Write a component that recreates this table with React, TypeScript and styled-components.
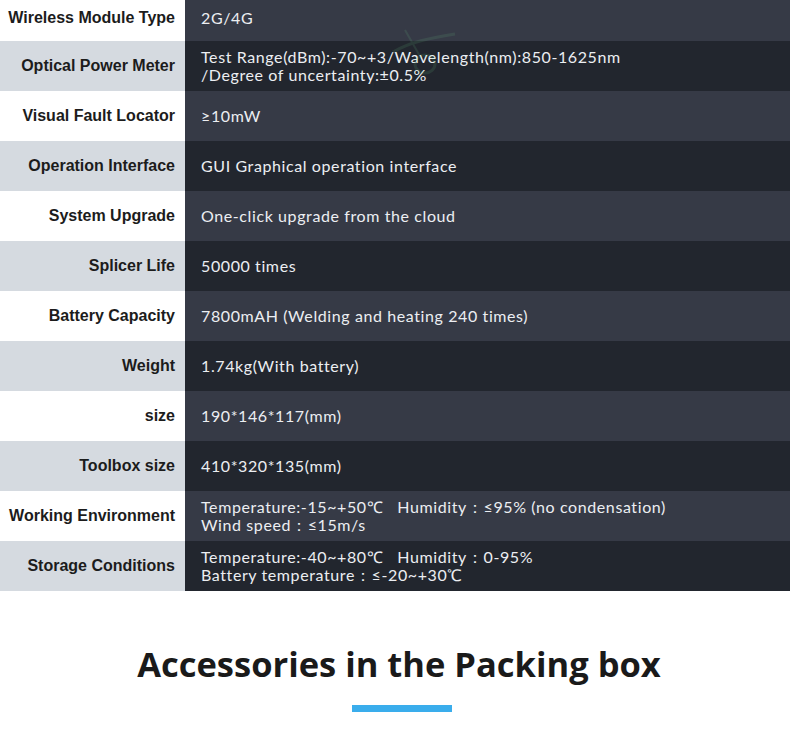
import { FC } from 'react';
import styled, { createGlobalStyle } from 'styled-components';

const GlobalStyle = createGlobalStyle`
  html, body {
    margin: 0;
    padding: 0;
    background: #ffffff;
  }
`;

const Page = styled.div`
  width: 790px;
  height: 750px;
  overflow: hidden;
  background: #ffffff;
`;

const SpecTable = styled.div`
  position: relative;
  display: flex;
  flex-direction: column;
`;

const SpecRow = styled.div<{ $first?: boolean }>`
  display: grid;
  grid-template-columns: 185px 1fr;
  height: ${({ $first }) => ($first ? '41px' : '50px')};
  box-sizing: border-box;
`;

const SpecLabel = styled.div<{ $alt: boolean; $first?: boolean }>`
  display: flex;
  align-items: center;
  justify-content: flex-end;
  padding: ${({ $first }) => ($first ? '0 10px 6px 0' : '0 10px 0 0')};
  background: ${({ $alt }) => ($alt ? '#d5dae0' : '#ffffff')};
  color: #1c1c1c;
  font-family: 'Liberation Sans', Arial, sans-serif;
  font-weight: 700;
  font-size: 16px;
  white-space: nowrap;
`;

const SpecValue = styled.div<{ $alt: boolean; $first?: boolean }>`
  display: flex;
  flex-direction: column;
  justify-content: center;
  padding: ${({ $first }) => ($first ? '0 0 6px 16px' : '0 0 0 16px')};
  background: ${({ $alt }) => ($alt ? '#22262e' : '#363a46')};
  color: #eceef2;
  font-family: Lato, 'Open Sans', sans-serif;
  font-size: 16px;
  letter-spacing: 0.6px;
  line-height: 18px;
  white-space: nowrap;
`;

const Watermark = styled.svg`
  position: absolute;
  left: 385px;
  top: 20px;
  pointer-events: none;
  opacity: 0.12;
`;

const Section = styled.div`
  display: flex;
  flex-direction: column;
  align-items: center;
  padding: 51px 0 0 8px;
`;

const Heading = styled.h2`
  margin: 0;
  font-family: 'Open Sans', 'Noto Sans', sans-serif;
  font-weight: 700;
  font-size: 34.5px;
  line-height: 44px;
  color: #1a1a1a;
`;

const Underline = styled.div`
  margin-top: 19px;
  margin-left: 6px;
  width: 100px;
  height: 7px;
  background: #3aadec;
`;

type Spec = {
  label: string;
  lines: string[];
};

const specs: Spec[] = [
  { label: 'Wireless Module Type', lines: ['2G/4G'] },
  {
    label: 'Optical Power Meter',
    lines: ['Test Range(dBm):-70~+3/Wavelength(nm):850-1625nm', '/Degree of uncertainty:±0.5%'],
  },
  { label: 'Visual Fault Locator', lines: ['≥10mW'] },
  { label: 'Operation Interface', lines: ['GUI Graphical operation interface'] },
  { label: 'System Upgrade', lines: ['One-click upgrade from the cloud'] },
  { label: 'Splicer Life', lines: ['50000 times'] },
  { label: 'Battery Capacity', lines: ['7800mAH (Welding and heating 240 times)'] },
  { label: 'Weight', lines: ['1.74kg(With battery)'] },
  { label: 'size', lines: ['190*146*117(mm)'] },
  { label: 'Toolbox size', lines: ['410*320*135(mm)'] },
  {
    label: 'Working Environment',
    lines: ['Temperature:-15~+50℃\u00a0\u00a0 Humidity：≤95% (no condensation)', 'Wind speed：≤15m/s'],
  },
  {
    label: 'Storage Conditions',
    lines: ['Temperature:-40~+80℃\u00a0\u00a0 Humidity：0-95%', 'Battery temperature：≤-20~+30℃'],
  },
];

const App: FC = () => (
  <Page>
    <GlobalStyle />
    <SpecTable>
      {specs.map((spec, i) => (
        <SpecRow key={spec.label} $first={i === 0}>
          <SpecLabel $alt={i % 2 === 1} $first={i === 0}>{spec.label}</SpecLabel>
          <SpecValue $alt={i % 2 === 1} $first={i === 0}>
            {spec.lines.map((line) => (
              <span key={line}>{line}</span>
            ))}
          </SpecValue>
        </SpecRow>
      ))}
      <Watermark width="80" height="60" viewBox="0 0 80 60">
        <path d="M8 32 C25 22 45 18 70 14" stroke="#6fcf8a" strokeWidth="3" fill="none" />
        <path d="M20 10 L36 38" stroke="#6fcf8a" strokeWidth="2" fill="none" />
        <ellipse cx="40" cy="44" rx="10" ry="9" fill="none" stroke="#6fcf8a" strokeWidth="3" />
      </Watermark>
    </SpecTable>
    <Section>
      <Heading>Accessories in the Packing box</Heading>
      <Underline />
    </Section>
  </Page>
);

export default App;
